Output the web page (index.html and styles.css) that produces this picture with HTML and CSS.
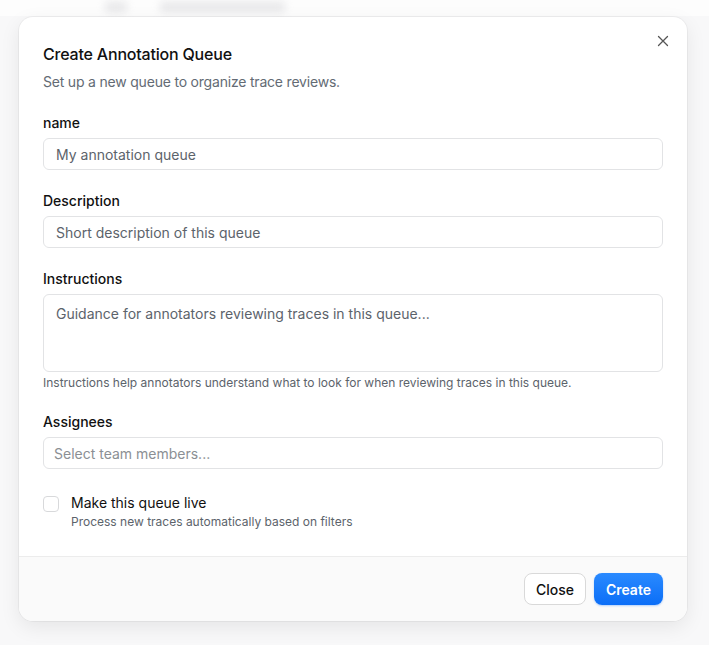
FILE: index.html
```html
<!DOCTYPE html>
<html lang="en">
<head>
  <meta charset="UTF-8">
  <meta name="viewport" content="width=device-width, initial-scale=1.0">
  <title>Create Annotation Queue</title>
  <link rel="stylesheet" href="styles.css">
</head>
<body>
  <div class="backdrop">
    <span class="ghost ghost-icon"></span>
    <span class="ghost ghost-text"></span>
  </div>

  <div class="modal">
    <div class="modal-body">
      <button class="close-x" aria-label="Close">
        <svg width="12" height="12" viewBox="0 0 12 12"><path d="M1.5 1.5l9 9M10.5 1.5l-9 9" stroke="#555" stroke-width="1.3" stroke-linecap="round"/></svg>
      </button>

      <div class="header">
        <h2>Create Annotation Queue</h2>
        <p>Set up a new queue to organize trace reviews.</p>
      </div>

      <div class="field">
        <label for="name">name</label>
        <input type="text" id="name" class="input" placeholder="My annotation queue">
      </div>

      <div class="field">
        <label for="desc">Description</label>
        <input type="text" id="desc" class="input" placeholder="Short description of this queue">
      </div>

      <div class="field">
        <label for="instr">Instructions</label>
        <textarea id="instr" class="input textarea" placeholder="Guidance for annotators reviewing traces in this queue..."></textarea>
        <div class="help">Instructions help annotators understand what to look for when reviewing traces in this queue.</div>
      </div>

      <div class="field">
        <label for="assignees">Assignees</label>
        <input type="text" id="assignees" class="input select" placeholder="Select team members...">
      </div>

      <div class="check-row">
        <span class="checkbox"></span>
        <div>
          <div class="check-title">Make this queue live</div>
          <div class="check-sub">Process new traces automatically based on filters</div>
        </div>
      </div>
    </div>

    <div class="modal-footer">
      <button class="btn btn-secondary">Close</button>
      <button class="btn btn-primary">Create</button>
    </div>
  </div>
</body>
</html>
```

FILE: styles.css
```css
* { box-sizing: border-box; }
body { margin: 0; padding: 17px 0 0 19px; background: #f8f8f9; font-family: Inter, "Noto Sans", sans-serif; color: #111; position: relative; min-height: 645px; }

.backdrop { position: absolute; top: 0; left: 0; right: 0; height: 16px; background: #fdfdfd; }
.ghost { position: absolute; top: 2px; height: 10px; background: #e6e6e8; border-radius: 4px; filter: blur(4px); }
.ghost-icon { left: 105px; width: 22px; }
.ghost-text { left: 160px; width: 125px; }

.modal { position: relative; width: 668px; background: #fff; border-radius: 14px; box-shadow: 0 0 0 1px rgba(0,0,0,0.04), 0 6px 20px rgba(0,0,0,0.08); overflow: hidden; }
.modal-body { position: relative; padding: 25px 24px 26px; display: flex; flex-direction: column; gap: 21px; }

.close-x { position: absolute; top: 18px; right: 18px; border: none; background: none; padding: 0; width: 12px; height: 12px; cursor: pointer; }

.header h2 { margin: 0; font-size: 16px; line-height: 24px; font-weight: 500; letter-spacing: -0.2px; }
.header p { margin: 6px 0 0; font-size: 14px; line-height: 20px; color: #636b74; letter-spacing: -0.2px; }

.field { display: flex; flex-direction: column; }
.field label { font-size: 14px; line-height: 20px; font-weight: 500; margin-bottom: 5px; }
.input { width: 620px; height: 32px; border: 1px solid #e2e3e5; border-radius: 6px; padding: 0 12px; font-family: inherit; font-size: 14px; color: #111; background: #fff; outline: none; }
.input::placeholder { color: #5c636b; }
.textarea { height: 78px; padding: 9px 12px; resize: none; line-height: 20px; }
.select { padding: 0 10px; }
.select::placeholder { color: #8b8f94; }
.help { margin-top: 3px; font-size: 12px; line-height: 16px; color: #5c636b; }

.check-row { display: flex; gap: 12px; margin-top: 3px; }
.checkbox { width: 16px; height: 16px; margin-top: 3px; border: 1px solid #d8d9db; border-radius: 4px; flex-shrink: 0; }
.check-title { font-size: 14px; line-height: 20px; }
.check-sub { font-size: 12px; line-height: 16px; color: #5c636b; margin-top: 1px; }

.modal-footer { display: flex; justify-content: flex-end; gap: 8px; padding: 16px 24px; background: #fafafa; border-top: 1px solid #ececec; }
.btn { height: 32px; border-radius: 8px; padding: 0 11px; font-family: inherit; font-size: 14px; cursor: pointer; }
.btn-secondary { background: #fff; border: 1px solid #d9d9d9; color: #111; font-weight: 500; }
.btn-primary { background: linear-gradient(#2a8aff, #0b6ef7); border: none; color: #fff; font-weight: 600; padding: 0 12px; box-shadow: 0 1px 2px rgba(11,110,247,0.3); }
```
